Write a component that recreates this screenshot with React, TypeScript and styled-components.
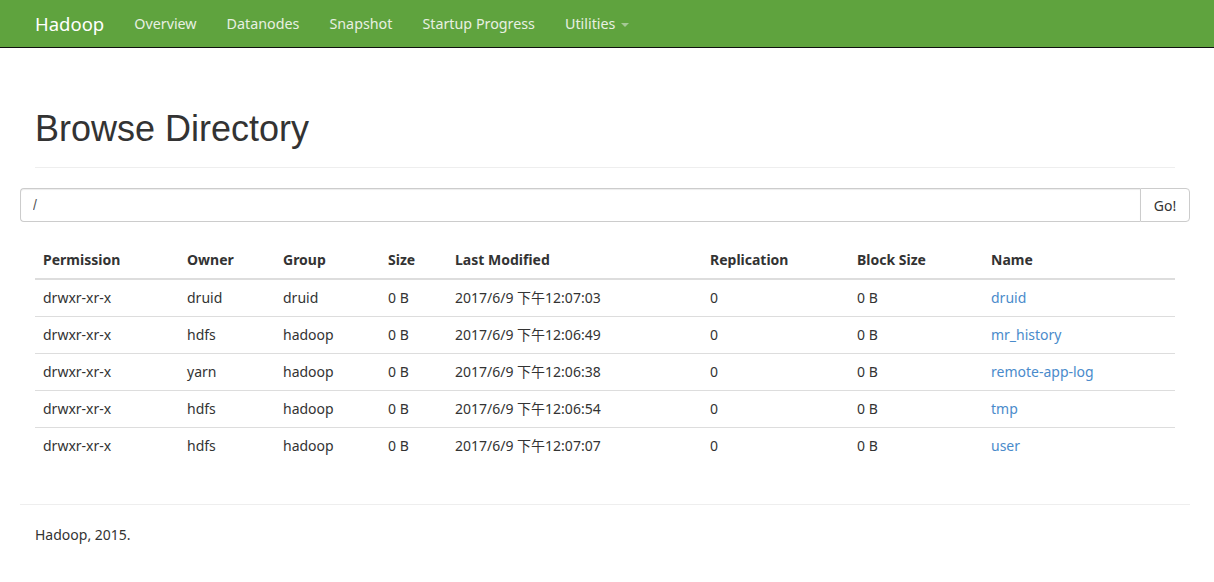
import React from "react";
import styled, { createGlobalStyle } from "styled-components";

const GlobalStyle = createGlobalStyle`
  html, body { margin: 0; padding: 0; background: #fff; }
  body {
    font-family: "Noto Sans", "Noto Sans CJK SC", sans-serif;
    font-size: 14px;
    line-height: 1.42857;
    color: #333;
  }
  * { box-sizing: border-box; }
`;

const Navbar = styled.nav`
  height: 48px;
  background: #5fa33e;
  border-bottom: 1px solid #101010;
`;

const NavInner = styled.div`
  display: flex;
  align-items: center;
  height: 47px;
  padding-left: 20px;
`;

const Brand = styled.a`
  font-size: 18.5px;
  color: #fff;
  padding: 0 15px;
  line-height: 44px;
  text-decoration: none;
`;

const NavLink = styled.a`
  font-size: 14.3px;
  color: #e8f0e2;
  padding: 0 15px;
  line-height: 44px;
  text-decoration: none;
  display: flex;
  align-items: center;
`;

const Caret = styled.span`
  display: inline-block;
  width: 0;
  height: 0;
  margin-left: 6px;
  margin-top: 2px;
  border-top: 4px solid #a5c896;
  border-left: 4px solid transparent;
  border-right: 4px solid transparent;
`;

const Container = styled.div`
  width: 1170px;
  margin-left: 20px;
`;

const PageHeader = styled.div`
  margin: 0 15px;
  padding-top: 59px;
  padding-bottom: 16px;
  border-bottom: 1px solid #eee;
`;

const Title = styled.h1`
  margin: 0;
  font-family: "Liberation Sans", Arial, sans-serif;
  font-weight: 400;
  font-size: 36px;
  line-height: 44px;
  color: #333;
`;

const SearchGroup = styled.form`
  display: flex;
  margin-top: 20px;
  height: 34px;
`;

const PathInput = styled.input`
  flex: 1;
  height: 34px;
  border: 1px solid #ccc;
  border-right: none;
  border-radius: 4px 0 0 4px;
  padding: 6px 12px;
  font-family: "Liberation Sans", Arial, sans-serif;
  font-size: 14px;
  color: #555;
  box-shadow: inset 0 1px 1px rgba(0, 0, 0, 0.075);
  outline: none;
`;

const GoButton = styled.button`
  width: 50px;
  height: 34px;
  border: 1px solid #ccc;
  border-radius: 0 4px 4px 0;
  background: #fff;
  font-family: "Noto Sans", sans-serif;
  font-size: 14px;
  color: #333;
  padding: 0;
`;

const Table = styled.table`
  margin: 20px 15px 0;
  width: 1140px;
  border-collapse: collapse;
  table-layout: fixed;
`;

const Th = styled.th<{ $w: number }>`
  width: ${(p) => p.$w}px;
  text-align: left;
  font-weight: 700;
  padding: 8px;
  line-height: 20px;
  height: 37px;
  vertical-align: bottom;
  border-bottom: 2px solid #ddd;
`;

const Td = styled.td`
  padding: 8px;
  height: 37px;
  line-height: 20px;
  border-top: 1px solid #ddd;
  white-space: nowrap;
`;

const BodyRow = styled.tr`
  &:first-child td { border-top: none; }
`;

const Link = styled.a`
  color: #4a8bcb;
  text-decoration: none;
`;

const Footer = styled.footer`
  margin-top: 39px;
  border-top: 1px solid #eee;
  padding: 20px 15px 0;
`;

const columns: [string, number][] = [
  ["Permission", 144],
  ["Owner", 96],
  ["Group", 105],
  ["Size", 67],
  ["Last Modified", 255],
  ["Replication", 147],
  ["Block Size", 134],
  ["Name", 192],
];

const rows = [
  ["drwxr-xr-x", "druid", "druid", "0 B", "2017/6/9 下午12:07:03", "0", "0 B", "druid"],
  ["drwxr-xr-x", "hdfs", "hadoop", "0 B", "2017/6/9 下午12:06:49", "0", "0 B", "mr_history"],
  ["drwxr-xr-x", "yarn", "hadoop", "0 B", "2017/6/9 下午12:06:38", "0", "0 B", "remote-app-log"],
  ["drwxr-xr-x", "hdfs", "hadoop", "0 B", "2017/6/9 下午12:06:54", "0", "0 B", "tmp"],
  ["drwxr-xr-x", "hdfs", "hadoop", "0 B", "2017/6/9 下午12:07:07", "0", "0 B", "user"],
];

export default function App() {
  return (
    <>
      <GlobalStyle />
      <Navbar>
        <NavInner>
          <Brand href="#">Hadoop</Brand>
          <NavLink href="#">Overview</NavLink>
          <NavLink href="#">Datanodes</NavLink>
          <NavLink href="#">Snapshot</NavLink>
          <NavLink href="#">Startup Progress</NavLink>
          <NavLink href="#">
            Utilities
            <Caret />
          </NavLink>
        </NavInner>
      </Navbar>
      <Container>
        <PageHeader>
          <Title>Browse Directory</Title>
        </PageHeader>
        <SearchGroup onSubmit={(e) => e.preventDefault()}>
          <PathInput defaultValue="/" />
          <GoButton type="submit">Go!</GoButton>
        </SearchGroup>
        <Table>
          <thead>
            <tr>
              {columns.map(([name, w]) => (
                <Th key={name} $w={w}>
                  {name}
                </Th>
              ))}
            </tr>
          </thead>
          <tbody>
            {rows.map((r) => (
              <BodyRow key={r[7]}>
                {r.slice(0, 7).map((c, i) => (
                  <Td key={i}>{c}</Td>
                ))}
                <Td>
                  <Link href="#">{r[7]}</Link>
                </Td>
              </BodyRow>
            ))}
          </tbody>
        </Table>
        <Footer>Hadoop, 2015.</Footer>
      </Container>
    </>
  );
}
